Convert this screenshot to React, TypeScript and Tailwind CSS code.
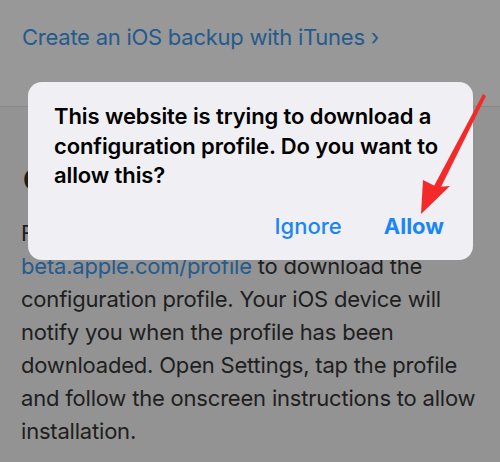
import React from 'react';

const bodyLines = [
  'configuration profile. Your iOS device will',
  'notify you when the profile has been',
  'downloaded. Open Settings, tap the profile',
  'and follow the onscreen instructions to allow',
  'installation.',
];

export default function App() {
  return (
    <div
      className="relative w-[500px] h-[462px] overflow-hidden bg-[#939393]"
      style={{ fontFamily: 'Inter, "Liberation Sans", sans-serif' }}
    >
      {/* page behind the dimming */}
      <div className="h-[107px] bg-[#989898] border-b border-[#878787] px-[22px] pt-[22px]">
        <a className="text-[22px] leading-[30px] text-[#245a8e] tracking-[-0.25px] whitespace-nowrap">
          Create an iOS backup with iTunes ›
        </a>
      </div>

      <div className="px-[21px] pt-[58px] text-[#1e1e1e]">
        <h2 className="pl-[2px] text-[28px] font-bold leading-[30px]">Get started</h2>
        <div className="mt-[22px] text-[22px] leading-[33px] tracking-[-0.2px] whitespace-nowrap">
          <div>From your iOS device, go to</div>
          <div>
            <span className="text-[#245a8e]">beta.apple.com/profile</span> to download the
          </div>
          {bodyLines.map((line, i) => (
            <div key={i}>{line}</div>
          ))}
        </div>
      </div>

      {/* alert */}
      <div className="absolute left-[28px] top-[82px] w-[445px] h-[178px] rounded-[14px] bg-[#f0f0f4] pl-[26px] pr-[29px] pt-[20px] flex flex-col">
        <p className="text-[22px] leading-[29.5px] font-semibold text-black tracking-[-0.1px]">
          This website is trying to download a configuration profile. Do you want to allow this?
        </p>
        <div className="mt-auto mb-[19px] flex justify-end items-center gap-[42px] text-[22px] leading-[30px] text-[#1a86f5]">
          <button className="font-medium">Ignore</button>
          <button className="font-bold">Allow</button>
        </div>
      </div>

      {/* red annotation arrow */}
      <svg className="absolute left-0 top-0" width="500" height="462" viewBox="0 0 500 462">
        <polygon points="483,94 486,96 440,189 434,186" fill="#f42a2a" />
        <polygon points="421,214 423,180 437,187 450,186" fill="#f42a2a" />
      </svg>
    </div>
  );
}
